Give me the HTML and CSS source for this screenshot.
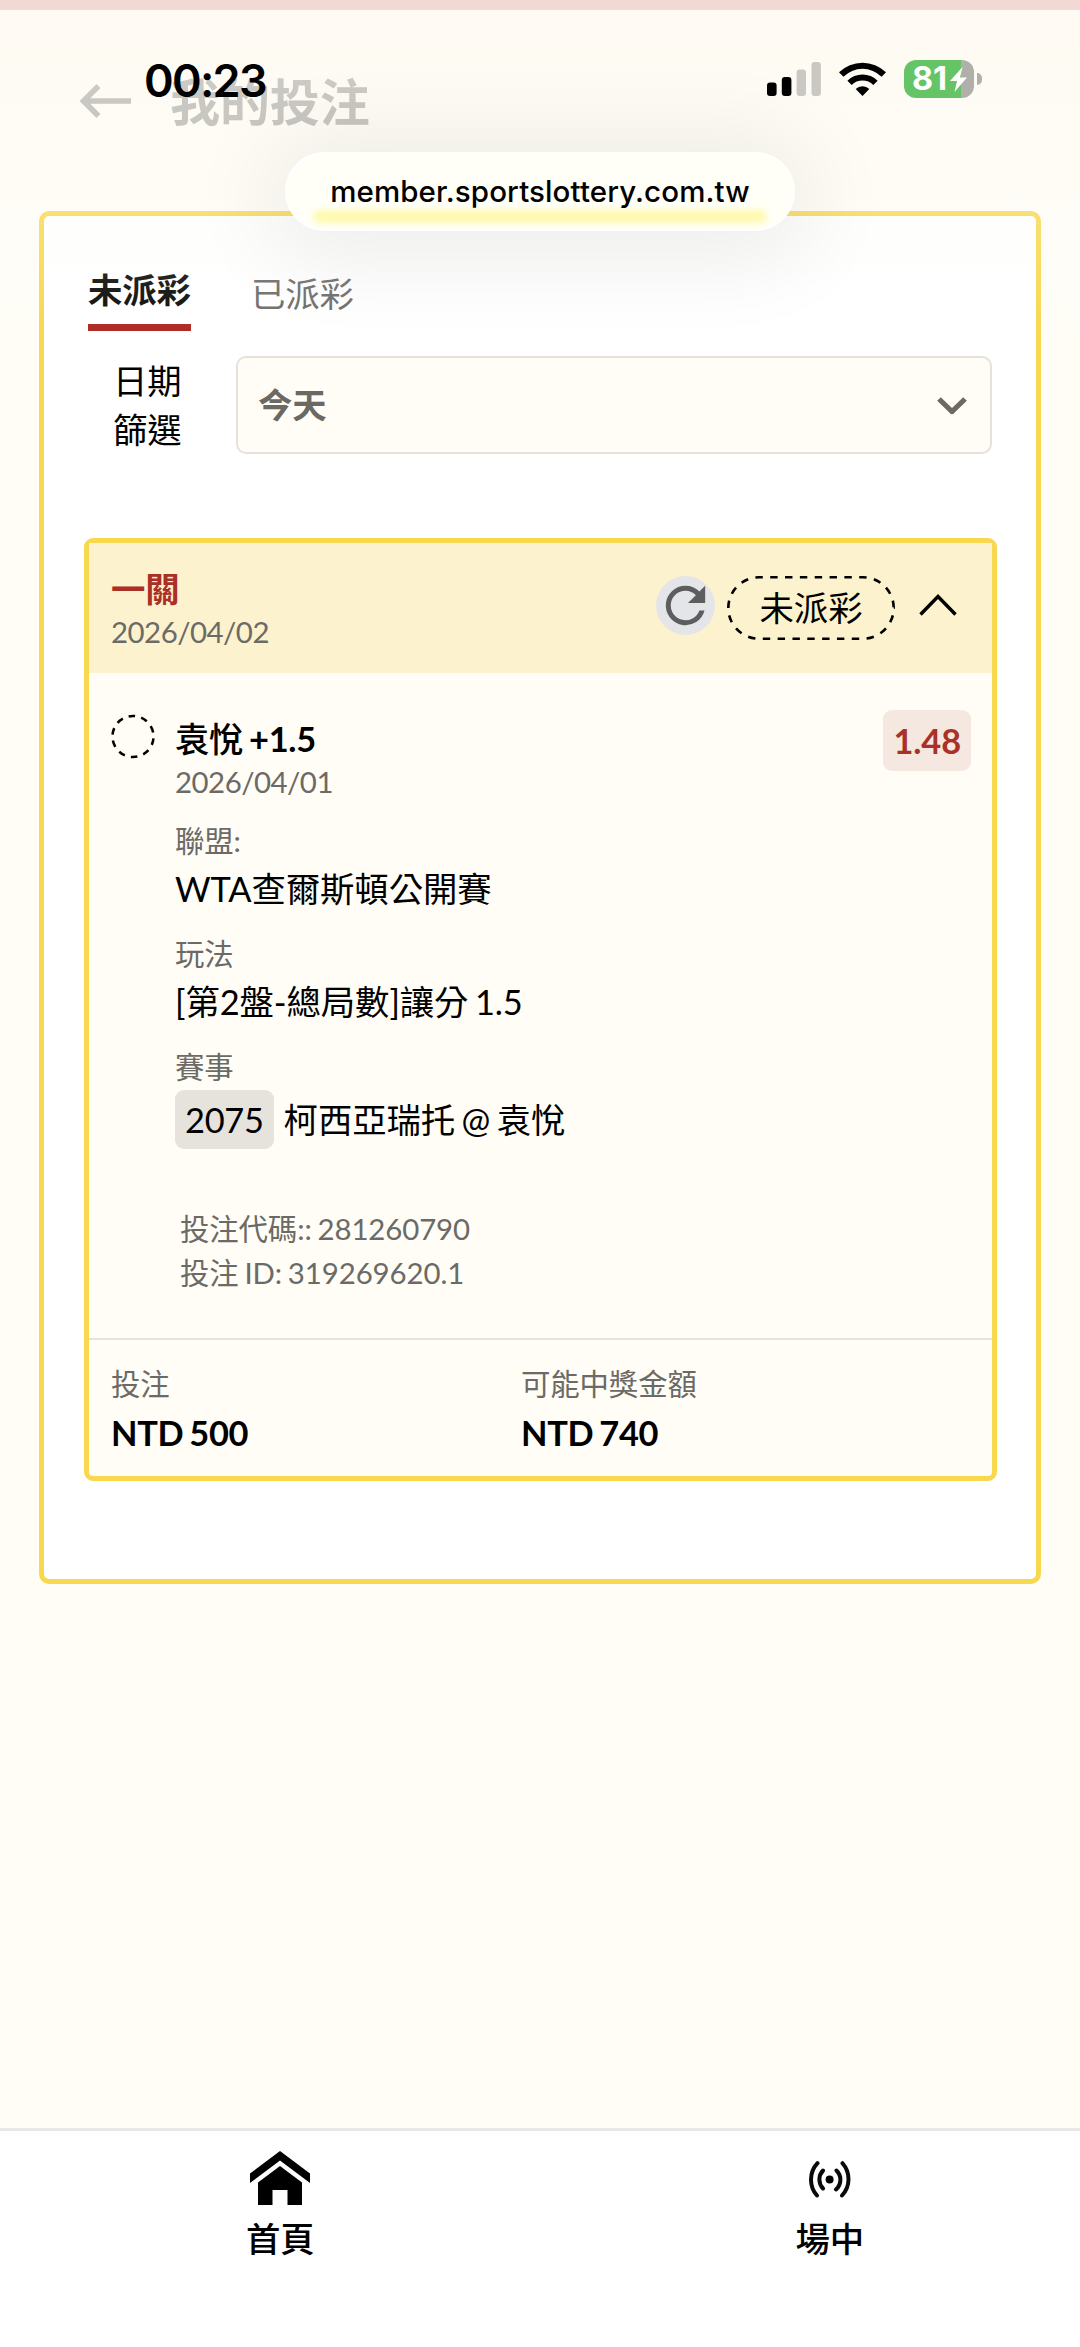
FILE: index.html
```html
<!DOCTYPE html>
<html lang="zh-Hant">
<head>
<meta charset="utf-8">
<meta name="viewport" content="width=device-width">
<title>我的投注</title>
<link rel="stylesheet" href="styles.css">
</head>
<body>
<div class="screen">
  <div class="top-strip"></div>
  <header class="page-header">
    <svg class="back" viewBox="0 0 52 36"><path d="M52 18H5M19.500 3L4.500 18l15 15" fill="none" stroke="currentColor" stroke-width="5.6"/></svg>
    <h1>我的投注</h1>
  </header>

  <div class="status">
    <span class="clock">00:23</span>
    <div class="indicators">
      <svg class="signal" viewBox="0 0 54 34"><rect x="0" y="20.5" width="9.6" height="13.5" rx="3"/><rect x="14.8" y="15" width="9.6" height="19" rx="3"/><g opacity=".2"><rect x="29.6" y="7.5" width="9.4" height="26.500" rx="3"/><rect x="44.500" y="0" width="9.400" height="34" rx="3"/></g></svg>
      <svg class="wifi" viewBox="0 0 47 35"><path d="M0 11.300A33.500 33.500 0 0 1 47 11.300L42.600 15.700A27.200 27.200 0 0 0 4.400 15.700ZM8.400 19.700A21.500 21.500 0 0 1 38.600 19.700L34.300 24A15.400 15.400 0 0 0 12.700 24ZM16.700 28A9.700 9.700 0 0 1 30.300 28L23.500 35Z"/></svg>
      <div class="battery"><div class="cell"><span>81</span><svg viewBox="0 0 17 25"><path d="M12.500 0L0 14H7L4.500 25L17 10.500H10Z" fill="#fff"/></svg></div><i class="nub"></i></div>
    </div>
  </div>

  <div class="address"><span>member.sportslottery.com.tw</span></div>

  <main class="panel">
    <nav class="tabs"><a class="tab active">未派彩</a><a class="tab">已派彩</a></nav>
    <div class="filter">
      <label>日期<br>篩選</label>
      <div class="select"><span>今天</span><svg viewBox="0 0 30 17"><path d="M2 2L15 14.500L28 2" fill="none" stroke="currentColor" stroke-width="5.200"/></svg></div>
    </div>

    <section class="bet">
      <header class="bet-head">
        <div class="bet-title"><strong>一關</strong><time>2026/04/02</time></div>
        <button class="refresh"><svg viewBox="0 0 24 24"><path d="M17.650 6.350A7.958 7.958 0 0 0 12 4a8 8 0 1 0 7.730 10h-2.080A6 6 0 1 1 12 6c1.660 0 3.140.690 4.220 1.780L13 11h7V4z"/></svg></button>
        <div class="state"><svg viewBox="0 0 168 64"><path d="M84 1.300H136A30.700 30.700 0 0 1 136 62.700H32A30.700 30.700 0 0 1 32 1.300Z" fill="none" stroke="#000" stroke-width="2.600" pathLength="270" stroke-dasharray="5 5" stroke-dashoffset="7.500"/></svg><span>未派彩</span></div>
        <svg class="fold" viewBox="0 0 38 22"><path d="M1.500 20.500L19 2.500L36.500 20.500" fill="none" stroke="#000" stroke-width="3.400"/></svg>
      </header>

      <div class="leg">
        <svg class="pending" viewBox="0 0 45 45"><circle cx="22.500" cy="22.500" r="21" fill="none" stroke="#000" stroke-width="2.600" pathLength="100" stroke-dasharray="5.200 4.800" stroke-dashoffset="-1.500"/></svg>
        <div class="leg-info">
          <div class="pick"><strong><span class="name">袁悅</span> +1.5</strong><time>2026/04/01</time></div>
          <dl>
            <div><dt>聯盟:</dt><dd>WTA查爾斯頓公開賽</dd></div>
            <div><dt>玩法</dt><dd>[第2盤-總局數]讓分 1.5</dd></div>
            <div><dt>賽事</dt><dd class="match"><span class="code">2075</span><span>柯西亞瑞托 @ 袁悅</span></dd></div>
          </dl>
          <div class="ids"><p>投注代碼:: 281260790</p><p>投注 ID: 319269620.1</p></div>
        </div>
        <span class="odds">1.48</span>
      </div>

      <footer class="totals">
        <div><span>投注</span><strong>NTD 500</strong></div>
        <div><span>可能中獎金額</span><strong>NTD 740</strong></div>
      </footer>
    </section>
  </main>

  <nav class="bottom">
    <a><svg class="home" viewBox="0 0 60 54"><path d="M30 0L60 22.500V32L30 9.500L0 32V22.500Z"/><path d="M30 15L52 31.500V54H37.500V39H22.500V54H8V31.500Z"/></svg><span>首頁</span></a>
    <a><svg class="live" viewBox="0 0 46 37"><g fill="none" stroke="#0a0a0a" stroke-width="4" stroke-linecap="round"><path d="M10.500 2.200A24 24 0 0 0 10 34.500M16 9.500A13 13 0 0 0 16 27.500M35.500 2.200A24 24 0 0 1 35 34.500M29.500 9.500A13 13 0 0 1 29 28.500"/></g><circle cx="22.600" cy="18.500" r="4"/></svg><span>場中</span></a>
  </nav>
  <div class="scrim"></div>
</div>
</body>
</html>
```
FILE: styles.css
```css
* { box-sizing: border-box; margin: 0; padding: 0; }
body {
  background: #fffdf6;
  color: #000;
  font: 34.4px/50px Lato, "Noto Sans CJK TC", sans-serif;
  word-spacing: -2.2px;
  letter-spacing: -.1px;
}
svg { display: block; flex: none; }
.screen { position: relative; height: 2347px; display: flex; flex-direction: column; overflow: hidden; }
.top-strip { height: 10px; background: #f2d9d3; flex: none; }

.page-header {
  height: 201px; flex: none;
  padding: 60px 0 0 79px;
  display: flex; align-items: flex-start; gap: 39px;
  color: #acaba7;
}
.page-header h1 { font-size: 50px; line-height: 64px; font-weight: 600; }
.back { width: 52px; height: 36px; margin-top: 13px; }

/* soft fade under the status bar */
.scrim {
  position: absolute; z-index: 1; left: 0; right: 0; top: 10px; height: 330px; pointer-events: none;
  background: linear-gradient(rgba(253, 248, 240, .5), rgba(252, 251, 246, .22) 60%, rgba(255, 255, 255, 0));
}

.status {
  position: absolute; z-index: 3; top: 57px; left: 144px; right: 98px; height: 44px;
  display: flex; justify-content: space-between;
}
.clock { font: 600 45px/48px Inter, sans-serif; letter-spacing: -1.700px; }
.indicators { display: flex; padding-top: 3px; }
.signal { width: 54px; height: 34px; margin-top: 2px; }
.wifi { width: 47px; height: 35px; margin: 1px 18px 0; }
.battery { display: flex; align-items: center; gap: 3px; height: 38px; }
.cell {
  width: 70px; height: 38px; border-radius: 12px;
  background: linear-gradient(90deg, #65c466 57px, #b0afaa 57px);
  display: flex; align-items: center; padding-left: 8px;
}
.cell span { font: 700 32.500px/38px Inter, sans-serif; color: #fff; width: 38px; }
.cell svg { width: 17px; height: 25px; }
.nub { width: 5px; height: 12px; border-radius: 0 6px 6px 0; background: #b0afaa; }

.address {
  position: absolute; z-index: 2; left: 285px; top: 152px; width: 510px; height: 79px;
  border-radius: 40px; background: #fffff8; border: 2px solid #fff;
  box-shadow: 0 8px 90px 20px rgba(0, 0, 0, .07);
  display: flex; justify-content: center; padding-top: 12px;
}
.address::after {
  content: ""; position: absolute; left: 26px; right: 26px; bottom: 6px; height: 13px;
  border-radius: 7px; background: #fffaae; filter: blur(3px);
}
.address span { position: relative; z-index: 1; font: 500 29.500px/50px Inter, sans-serif; height: 50px; letter-spacing: .12px; white-space: nowrap; }

.panel {
  height: 1373px; flex: none; margin: 0 39px;
  border: 5px solid #f8d84f; border-radius: 10px; background: #fff;
  padding: 49px 39px 0 40px;
}
.tabs { display: flex; gap: 60px; padding-left: 4px; }
.tab { height: 66px; color: #6c6b67; padding-top: 4px; }
.tab.active { color: #0a0a08; font-weight: 700; padding-top: 0; border-bottom: 7px solid #ae2922; }
.filter { display: flex; margin-top: 25px; padding-right: 5px; align-items: center; }
.filter label { width: 152px; padding-left: 29px; line-height: 49px; }
.select {
  flex: 1; height: 98px; border: 2px solid #e6e2db; border-radius: 10px; background: #fffdf6;
  display: flex; align-items: center; justify-content: space-between;
  padding: 0 23px 0 20px; color: #6a6964; font-weight: 600;
}
.select svg { width: 30px; height: 17px; }

.bet { margin-top: 84px; height: 943px; border: 5px solid #f8d84f; border-radius: 9px; background: #fffdf6; display: flex; flex-direction: column; }
.bet-head { height: 130px; flex: none; background: #fdf2ce; display: flex; align-items: flex-start; padding: 21px 35px 0 22px; }
.bet-title { display: flex; flex-direction: column; flex: 1; }
.bet-title strong { color: #aa3026; }
time { font-size: 29.400px; line-height: 36px; color: #6b6a66; letter-spacing: -.5px; }
.refresh { width: 59px; height: 59px; border: 0; border-radius: 50%; background: #e4e5e8; margin: 12px 12px 0 0; }
.refresh svg { width: 59px; height: 59px; fill: #5b5d5e; }
.state { width: 168px; height: 64px; margin-top: 12px; display: grid; place-items: center; }
.state > * { grid-area: 1 / 1; }
.fold { width: 38px; height: 22px; margin: 30px 0 0 24px; }

.leg { height: 665px; display: flex; align-items: flex-start; padding: 36px 21px 0 22px; }
.pending { width: 44px; height: 45px; margin: 5px 20px 0 0; }
.leg-info { flex: 1; padding-top: 5px; }
.pick { display: flex; flex-direction: column; }
.pick strong { letter-spacing: -.3px; }
.name { font-weight: 500; }
dl { margin-top: 19px; display: grid; gap: 18px; }
dt { font-size: 29.400px; line-height: 44px; color: #6b6a66; }
dd { line-height: 51px; }
.match { display: flex; align-items: center; gap: 10px; height: 59px; margin-top: 1px; }
.code { background: #e6e2dc; border-radius: 9px; line-height: 59px; padding: 0 10px; letter-spacing: -.3px; }
.ids { margin-top: 58px; padding-left: 5px; font-size: 29.400px; line-height: 44.200px; color: #6b6a66; word-spacing: -1.600px; }
.odds { background: #f5e8e0; color: #a93127; font-weight: 700; border-radius: 9px; line-height: 61px; padding: 0 10px; margin-top: 1px; }

.totals { border-top: 2px solid #e6e2dc; flex: 1; display: grid; grid-template-columns: 410px 1fr; padding: 22px 22px 0; }
.totals div { display: flex; flex-direction: column; }
.totals span { font-size: 29.400px; line-height: 44px; color: #6b6a66; }
.totals strong { line-height: 53px; letter-spacing: -.3px; }

.bottom {
  margin-top: auto; height: 219px; flex: none; border-top: 3px solid #e9e6e6; background: #fff;
  display: flex; justify-content: space-between; padding: 20px 216px 0 246px; font-weight: 500;
}
.bottom a { display: flex; flex-direction: column; align-items: center; gap: 9px; }
.home { width: 60px; height: 54px; }
.live { width: 46px; height: 37px; margin: 10px 0 7px; }
```
